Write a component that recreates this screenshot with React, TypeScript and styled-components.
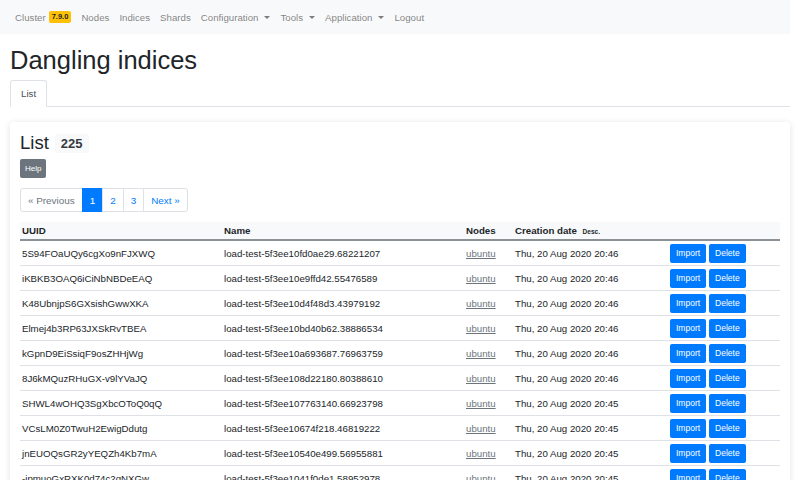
import React from "react";
import styled, { createGlobalStyle } from "styled-components";

const GlobalStyle = createGlobalStyle`
  body {
    margin: 0;
    background: #ffffff;
    font-family: "Liberation Sans", "Helvetica Neue", Arial, sans-serif;
    color: #212529;
    overflow: hidden;
  }
`;

type Row = { uuid: string; name: string; time: string };

const rows: Row[] = [
  { uuid: "5S94FOaUQy6cgXo9nFJXWQ", name: "load-test-5f3ee10fd0ae29.68221207", time: "20:46" },
  { uuid: "iKBKB3OAQ6iCiNbNBDeEAQ", name: "load-test-5f3ee10e9ffd42.55476589", time: "20:46" },
  { uuid: "K48UbnjpS6GXsishGwwXKA", name: "load-test-5f3ee10d4f48d3.43979192", time: "20:46" },
  { uuid: "Elmej4b3RP63JXSkRvTBEA", name: "load-test-5f3ee10bd40b62.38886534", time: "20:46" },
  { uuid: "kGpnD9EiSsiqF9osZHHjWg", name: "load-test-5f3ee10a693687.76963759", time: "20:46" },
  { uuid: "8J6kMQuzRHuGX-v9lYVaJQ", name: "load-test-5f3ee108d22180.80388610", time: "20:46" },
  { uuid: "SHWL4wOHQ3SgXbcOToQ0qQ", name: "load-test-5f3ee107763140.66923798", time: "20:45" },
  { uuid: "VCsLM0Z0TwuH2EwigDdutg", name: "load-test-5f3ee10674f218.46819222", time: "20:45" },
  { uuid: "jnEUOQsGR2yYEQZh4Kb7mA", name: "load-test-5f3ee10540e499.56955881", time: "20:45" },
  { uuid: "-jpmuoGxRXK0d74c2gNXGw", name: "load-test-5f3ee1041f0de1.58952978", time: "20:45" },
];

const App = () => {
  return (
    <Page>
      <GlobalStyle />
      <NavBar>
        <NavItem>
          Cluster <VersionBadge>7.9.0</VersionBadge>
        </NavItem>
        <NavItem>Nodes</NavItem>
        <NavItem>Indices</NavItem>
        <NavItem>Shards</NavItem>
        <NavItem>
          Configuration <Caret />
        </NavItem>
        <NavItem>
          Tools <Caret />
        </NavItem>
        <NavItem>
          Application <Caret />
        </NavItem>
        <NavItem>Logout</NavItem>
      </NavBar>
      <Content>
        <Title>Dangling indices</Title>
        <Tabs>
          <Tab>List</Tab>
        </Tabs>
        <Card>
          <CardTitle>
            List <CountBadge>225</CountBadge>
          </CardTitle>
          <HelpButton>Help</HelpButton>
          <Pagination>
            <PageLink>« Previous</PageLink>
            <PageLink active>1</PageLink>
            <PageLink>2</PageLink>
            <PageLink>3</PageLink>
            <PageLink>Next »</PageLink>
          </Pagination>
          <Table>
            <colgroup>
              <col style={{ width: 202 }} />
              <col style={{ width: 242 }} />
              <col style={{ width: 49 }} />
              <col style={{ width: 155 }} />
              <col style={{ width: 112 }} />
            </colgroup>
            <thead>
              <tr>
                <Th>UUID</Th>
                <Th>Name</Th>
                <Th>Nodes</Th>
                <Th>
                  Creation date <SortHint>Desc.</SortHint>
                </Th>
                <Th />
              </tr>
            </thead>
            <tbody>
              {rows.map((r) => (
                <tr key={r.uuid}>
                  <Td>{r.uuid}</Td>
                  <Td>{r.name}</Td>
                  <Td>
                    <NodeLink>ubuntu</NodeLink>
                  </Td>
                  <Td>Thu, 20 Aug 2020 {r.time}</Td>
                  <Td>
                    <Actions>
                      <ActionButton>Import</ActionButton>
                      <ActionButton>Delete</ActionButton>
                    </Actions>
                  </Td>
                </tr>
              ))}
            </tbody>
          </Table>
        </Card>
      </Content>
    </Page>
  );
};

const Page = styled.div`
  width: 790px;
`;

const NavBar = styled.nav`
  height: 34px;
  background-color: #f8f9fa;
  display: flex;
  align-items: center;
  padding: 0 5px 0 10px;
`;

const NavItem = styled.span`
  display: flex;
  align-items: center;
  padding: 0 5px;
  font-size: 9.7px;
  color: rgba(0, 0, 0, 0.5);
  white-space: nowrap;
`;

const VersionBadge = styled.span`
  margin-left: 3px;
  background-color: #ffc107;
  color: #212529;
  font-size: 7.5px;
  font-weight: 700;
  padding: 2px 3px;
  border-radius: 2px;
  line-height: 1;
`;

const Caret = styled.span`
  display: inline-block;
  margin-left: 6px;
  width: 0;
  height: 0;
  border-left: 3px solid transparent;
  border-right: 3px solid transparent;
  border-top: 3px solid rgba(0, 0, 0, 0.5);
`;

const Content = styled.div`
  padding-left: 10px;
`;

const Title = styled.h1`
  margin: 0;
  padding: 10px 0 4px;
  font-size: 25.5px;
  font-weight: 500;
  line-height: 32px;
`;

const Tabs = styled.div`
  display: flex;
  border-bottom: 1px solid #dee2e6;
`;

const Tab = styled.div`
  height: 25px;
  padding: 0 10px;
  display: flex;
  align-items: center;
  font-size: 9.7px;
  color: #495057;
  border: 1px solid #dee2e6;
  border-bottom-color: #fff;
  border-radius: 3px 3px 0 0;
  margin-bottom: -1px;
  background: #fff;
`;

const Card = styled.div`
  margin-top: 15px;
  padding: 10px 10px 0 10px;
  box-shadow: 0 1px 6px rgba(0, 0, 0, 0.12);
  border-radius: 3px;
`;

const CardTitle = styled.div`
  display: flex;
  align-items: center;
  height: 22px;
  font-size: 18.5px;
  font-weight: 500;
  gap: 6px;
`;

const CountBadge = styled.span`
  background-color: #f8f9fa;
  color: #343a40;
  font-size: 13px;
  font-weight: 700;
  padding: 3px 6px;
  border-radius: 2px;
  line-height: 1;
`;

const HelpButton = styled.button`
  display: block;
  margin-top: 5px;
  height: 19px;
  padding: 0 5px;
  border: 0;
  border-radius: 2px;
  background-color: #6c757d;
  color: #fff;
  font-family: inherit;
  font-size: 8px;
`;

const Pagination = styled.div`
  display: flex;
  margin-top: 10px;
`;

const PageLink = styled.span<{ active?: boolean }>`
  height: 22px;
  padding: 0 7px;
  display: flex;
  align-items: center;
  font-size: 9.9px;
  border: 1px solid ${(p) => (p.active ? "#007bff" : "#dee2e6")};
  margin-left: -1px;
  background-color: ${(p) => (p.active ? "#007bff" : "#fff")};
  color: ${(p) => (p.active ? "#fff" : "#007bff")};
  &:first-child {
    margin-left: 0;
    color: #6c757d;
    border-radius: 3px 0 0 3px;
  }
  &:last-child {
    border-radius: 0 3px 3px 0;
  }
`;

const Table = styled.table`
  margin-top: 10px;
  width: 760px;
  table-layout: fixed;
  border-collapse: collapse;
  font-size: 9.7px;
`;

const Th = styled.th`
  height: 17px;
  padding: 0 2px;
  text-align: left;
  font-weight: 700;
  background-color: #f8f9fa;
  border-bottom: 2px solid #8c9196;
  white-space: nowrap;
`;

const SortHint = styled.span`
  font-size: 6.5px;
  margin-left: 3px;
`;

const Td = styled.td`
  height: 24px;
  padding: 0 2px;
  border-bottom: 1px solid #dee2e6;
  white-space: nowrap;
  overflow: hidden;
`;

const NodeLink = styled.span`
  color: #6c757d;
  text-decoration: underline;
`;

const Actions = styled.div`
  display: flex;
  gap: 3px;
`;

const ActionButton = styled.button`
  height: 19px;
  padding: 0 6px;
  border: 0;
  border-radius: 2px;
  background-color: #007bff;
  color: #fff;
  font-family: inherit;
  font-size: 8.5px;
`;

export default App;
